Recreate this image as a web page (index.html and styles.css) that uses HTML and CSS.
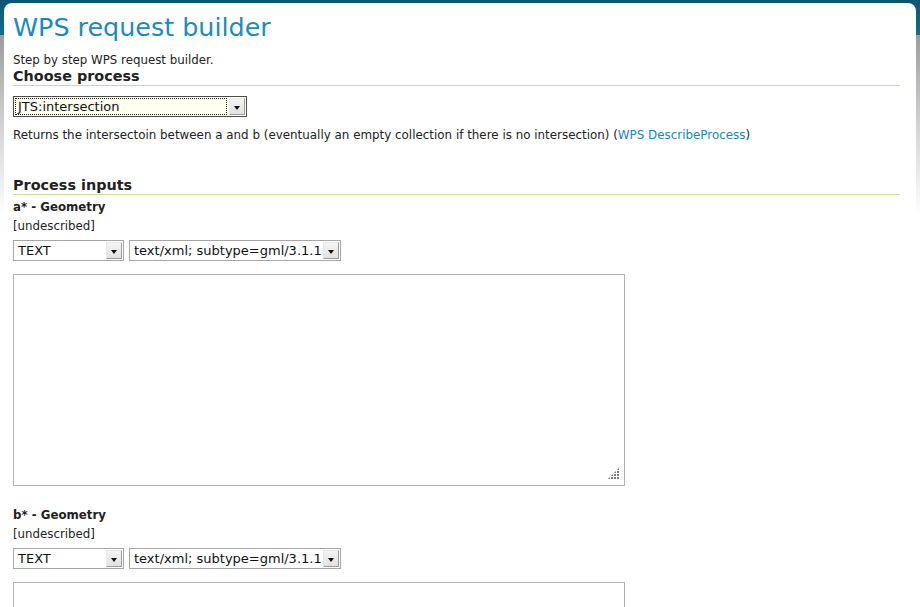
FILE: index.html
```html
<!DOCTYPE html>
<html>
<head>
<meta charset="utf-8">
<link rel="stylesheet" href="styles.css">
</head>
<body>
<div class="page">
  <h1 class="title">WPS request builder</h1>
  <p class="intro">Step by step WPS request builder.</p>
  <h2 class="section">Choose process</h2>
  <div class="dd dd-process"><span class="dd-value"><span class="focus">JTS:intersection</span></span><span class="dd-btn"><span class="tri"></span></span></div>
  <p class="desc">Returns the intersectoin between a and b (eventually an empty collection if there is no intersection) (<a href="#">WPS DescribeProcess</a>)</p>
  <h2 class="section inputs">Process inputs</h2>

  <div class="input">
    <div class="label">a* - Geometry</div>
    <div class="help">[undescribed]</div>
    <div class="row">
      <div class="dd dd-type"><span class="dd-value">TEXT</span><span class="dd-btn"><span class="tri"></span></span></div>
      <div class="dd dd-mime"><span class="dd-value">text/xml; subtype=gml/3.1.1</span><span class="dd-btn"><span class="tri"></span></span></div>
    </div>
    <div class="ta-wrap"><textarea class="ta"></textarea><span class="grip"></span></div>
  </div>

  <div class="input">
    <div class="label">b* - Geometry</div>
    <div class="help">[undescribed]</div>
    <div class="row">
      <div class="dd dd-type"><span class="dd-value">TEXT</span><span class="dd-btn"><span class="tri"></span></span></div>
      <div class="dd dd-mime"><span class="dd-value">text/xml; subtype=gml/3.1.1</span><span class="dd-btn"><span class="tri"></span></span></div>
    </div>
    <div class="ta-wrap"><textarea class="ta"></textarea><span class="grip"></span></div>
  </div>
</div>
</body>
</html>
```

FILE: styles.css
```css
html, body {
  margin: 0;
  padding: 0;
  height: 100%;
  overflow: hidden;
}
body {
  background: linear-gradient(to bottom, #0c5474 0, #0f6e92 35px, #9c9c9c 35px, #cfcfcf 120px, #ffffff 215px);
  font-family: "DejaVu Sans", Verdana, sans-serif;
  font-size: 11.8px;
  color: #222;
}
.page {
  margin: 3px 4px 0 4px;
  background: #fff;
  border-radius: 8px 8px 0 0;
  padding: 1px 16px 0 9px;
  min-height: 700px;
}
.title {
  font-size: 25.4px;
  font-weight: normal;
  color: #1a8bc1;
  margin: 8px 0 0 0;
  line-height: 30px;
}
.intro {
  margin: 11px 0 0 0;
  line-height: 15px;
}
.section {
  font-size: 14.4px;
  font-weight: bold;
  color: #222;
  margin: 0;
  line-height: 16px;
  padding-bottom: 1px;
  border-bottom: 1px solid #c8dca4;
}
.section.inputs {
  margin-top: 34px;
}
.dd {
  display: flex;
  height: 21px;
  box-sizing: border-box;
  border: 1px solid #a6a6a6;
  background: #fff;
  font-size: 13px;
  color: #111;
}
.dd-value {
  flex: 1;
  display: flex;
  align-items: center;
  padding-left: 4px;
  white-space: nowrap;
  overflow: hidden;
}
.dd-btn {
  width: 14px;
  margin: 1px;
  background: linear-gradient(to bottom, #f4f4f4, #e2e2e2);
  border: 1px solid #c2c2c2;
  border-color: #e8e8e8 #9a9a9a #9a9a9a #e8e8e8;
  display: flex;
  align-items: center;
  justify-content: center;
}
.tri {
  width: 0;
  height: 0;
  border-left: 3.5px solid transparent;
  border-right: 3.5px solid transparent;
  border-top: 4px solid #111;
  margin-top: 2px;
}
.dd-process {
  width: 234px;
  margin-top: 10px;
  border-color: #4c4c4c;
  background: #fffff2;
}
.dd-process .dd-value {
  padding: 1px;
}
.focus {
  display: flex;
  align-items: center;
  height: 100%;
  width: 100%;
  box-sizing: border-box;
  border: 1px dotted #222;
  padding-left: 2px;
}
.desc {
  margin: 11px 0 0 0;
  line-height: 15px;
  font-size: 11.9px;
}
.desc a {
  color: #1a84bf;
  text-decoration: none;
}
.label {
  font-weight: bold;
  margin-top: 5px;
  line-height: 15px;
}
.help {
  margin-top: 4px;
  line-height: 15px;
}
.row {
  display: flex;
  gap: 5px;
  margin-top: 6px;
}
.dd-type {
  width: 111px;
}
.dd-mime {
  width: 212px;
}
.ta-wrap {
  position: relative;
  width: 612px;
  height: 212px;
  margin-top: 13px;
}
.ta {
  display: block;
  width: 100%;
  height: 100%;
  box-sizing: border-box;
  border: 1px solid #b4b4b4;
  resize: none;
  margin: 0;
  padding: 2px;
  font-family: "DejaVu Sans Mono", monospace;
  font-size: 13px;
}
.grip {
  position: absolute;
  right: 6px;
  bottom: 7px;
  width: 11px;
  height: 11px;
  background-image: radial-gradient(circle at 1px 1px, #7a7a7a 0.9px, transparent 1.1px);
  background-size: 3px 3px;
  background-position: 0 0;
  clip-path: polygon(100% 0, 100% 100%, 0 100%);
}
.input + .input {
  margin-top: 22px;
}
```
